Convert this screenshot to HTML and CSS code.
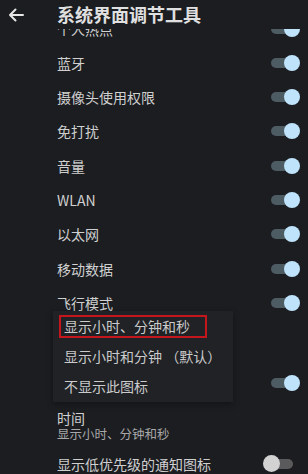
FILE: index.html
```html
<!DOCTYPE html>
<html lang="zh">
<head>
  <meta charset="UTF-8">
  <meta name="viewport" content="width=device-width, initial-scale=1.0">
  <title>系统界面调节工具</title>
  <link rel="stylesheet" href="styles.css">
</head>
<body>
<div class="screen">
  <!-- App bar -->
  <header class="appbar">
    <svg class="back" width="16" height="14" viewBox="0 0 16 14">
      <path d="M15 7H2M7.5 1.5L2 7l5.5 5.5" fill="none" stroke="#e6e6e6" stroke-width="2" stroke-linecap="round" stroke-linejoin="round"/>
    </svg>
    <h1>系统界面调节工具</h1>
  </header>

  <!-- Settings list -->
  <div class="list">
    <div class="row first"><span class="label">个人热点</span><span class="switch on"></span></div>
    <div class="row"><span class="label">蓝牙</span><span class="switch on"></span></div>
    <div class="row"><span class="label">摄像头使用权限</span><span class="switch on"></span></div>
    <div class="row"><span class="label">免打扰</span><span class="switch on"></span></div>
    <div class="row"><span class="label">音量</span><span class="switch on"></span></div>
    <div class="row"><span class="label">WLAN</span><span class="switch on"></span></div>
    <div class="row"><span class="label">以太网</span><span class="switch on"></span></div>
    <div class="row"><span class="label">移动数据</span><span class="switch on"></span></div>
    <div class="row"><span class="label">飞行模式</span><span class="switch on"></span></div>
    <div class="row tall"></div>
    <div class="row"><span class="label"></span><span class="switch on"></span></div>
    <div class="row tall">
      <div class="text">
        <span class="label">时间</span>
        <span class="summary">显示小时、分钟和秒</span>
      </div>
    </div>
    <div class="row"><span class="label">显示低优先级的通知图标</span><span class="switch off"></span></div>
  </div>

  <!-- Dropdown menu for 时间 -->
  <div class="menu">
    <div class="menu-item"><span class="marked">显示小时、分钟和秒</span></div>
    <div class="menu-item">显示小时和分钟 （默认）</div>
    <div class="menu-item">不显示此图标</div>
  </div>
</div>
</body>
</html>
```

FILE: styles.css
```css
:root {
  --bg-color: #1b1d21;
  --menu-color: #202226;
  --text-color: #d0d0d0;
  --summary-color: #a8a8a8;
  --track-on: #4d5b63;
  --thumb-on: #bfe3fb;
  --track-off: #5a5a5c;
  --thumb-off: #d2d2d2;
  --mark-color: #c4161c;
}

body {
  margin: 0;
  background-color: var(--bg-color);
  font-family: "Noto Sans CJK SC", "Noto Sans", sans-serif;
  color: var(--text-color);
}

.screen {
  position: relative;
  width: 308px;
  height: 474px;
  overflow: hidden;
  display: flex;
  flex-direction: column;
}

/* App bar */
.appbar {
  height: 29px;
  flex: none;
  display: flex;
  align-items: center;
  background-color: var(--bg-color);
  position: relative;
  z-index: 2;
}

.back {
  margin-left: 8px;
  margin-right: 33px;
}

.appbar h1 {
  margin: 0 0 2px;
  font-size: 18px;
  font-weight: 700;
  color: #e0e0e0;
}

/* List */
.list {
  display: flex;
  flex-direction: column;
}

.row {
  height: 34.3px;
  flex: none;
  display: flex;
  align-items: center;
  justify-content: space-between;
  padding: 0 8px 0 57px;
}

.row.first {
  margin-top: -17.6px;
}

.row.tall {
  height: 46px;
}

.label {
  font-size: 14px;
  line-height: 16px;
}

.text {
  display: flex;
  flex-direction: column;
  padding-top: 4px;
}

.summary {
  font-size: 12.5px;
  line-height: 15px;
  color: var(--summary-color);
}

/* Switches */
.switch {
  position: relative;
  width: 30px;
  height: 16px;
}

.switch::before {
  content: "";
  position: absolute;
  left: 1px;
  right: 3px;
  top: 3px;
  height: 10px;
  border-radius: 5px;
}

.switch::after {
  content: "";
  position: absolute;
  top: 0;
  width: 16px;
  height: 16px;
  border-radius: 50%;
}

.switch.on::before {
  background-color: var(--track-on);
}

.switch.on::after {
  right: 0;
  background-color: var(--thumb-on);
}

.switch.off {
  margin-right: 4px;
}

.switch.off::before {
  background-color: var(--track-off);
}

.switch.off::after {
  left: -3px;
  width: 17px;
  height: 17px;
  top: -1px;
  background-color: var(--thumb-off);
}

/* Dropdown menu */
.menu {
  position: absolute;
  left: 53px;
  top: 311px;
  width: 180px;
  padding-bottom: 1px;
  background-color: var(--menu-color);
  box-shadow: 0 2px 6px rgba(0, 0, 0, 0.35);
  z-index: 3;
}

.menu-item {
  height: 30px;
  display: flex;
  align-items: center;
  padding-left: 11px;
  font-size: 14px;
  color: #cbcbcb;
  white-space: nowrap;
}

.marked {
  margin-left: -5px;
  padding: 2px 15px 2px 3px;
  border: 2px solid var(--mark-color);
  line-height: 15px;
}
```
